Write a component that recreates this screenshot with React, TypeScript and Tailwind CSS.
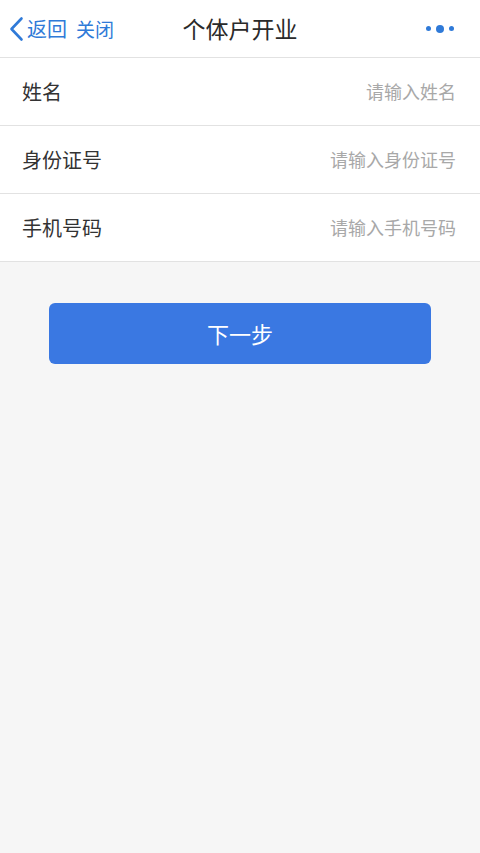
import React from "react";

const fields = [
  { label: "姓名", placeholder: "请输入姓名" },
  { label: "身份证号", placeholder: "请输入身份证号" },
  { label: "手机号码", placeholder: "请输入手机号码" },
];

export default function App() {
  return (
    <div
      className="flex min-h-[853px] w-full flex-col bg-[#f6f6f6]"
      style={{ fontFamily: '"Noto Sans CJK SC", "Noto Sans", sans-serif' }}
    >
      {/* Header */}
      <header className="relative flex h-[58px] items-center border-b border-[#e2e2e2] bg-white">
        <div className="flex items-center pl-[9px] text-[#2f7ad8]">
          <svg width="15" height="26" viewBox="0 0 15 26" fill="none">
            <path d="M12.5 2.5L2.5 13l10 10.5" stroke="#2f7ad8" strokeWidth="2.6" strokeLinecap="round" strokeLinejoin="round" />
          </svg>
          <span className="ml-[3px] text-[20px] leading-none">返回</span>
          <span className="ml-[9px] text-[19px] leading-none">关闭</span>
        </div>
        <h1 className="absolute left-1/2 -translate-x-1/2 text-[23px] leading-none text-[#2a2a2a]">
          个体户开业
        </h1>
        <div className="ml-auto mr-[26px] flex items-center gap-[5px]">
          <span className="h-[5px] w-[5px] rounded-full bg-[#2f7ad8]" />
          <span className="h-[8px] w-[8px] rounded-full bg-[#2f7ad8]" />
          <span className="h-[5px] w-[5px] rounded-full bg-[#2f7ad8]" />
        </div>
      </header>

      {/* Form */}
      <div className="bg-white">
        {fields.map((f) => (
          <div
            key={f.label}
            className="flex h-[68px] items-center justify-between border-b border-[#e2e2e2] pl-[22px] pr-[24px]"
          >
            <span className="text-[20px] text-[#333]">{f.label}</span>
            <input
              className="w-[200px] bg-transparent text-right text-[18px] text-[#333] outline-none placeholder:text-[#a8a8a8]"
              placeholder={f.placeholder}
            />
          </div>
        ))}
      </div>

      <div className="px-[49px] pt-[41px]">
        <button className="flex h-[61px] w-full items-center justify-center rounded-[6px] bg-[#3a78e2] text-[22px] text-white">
          下一步
        </button>
      </div>
    </div>
  );
}
